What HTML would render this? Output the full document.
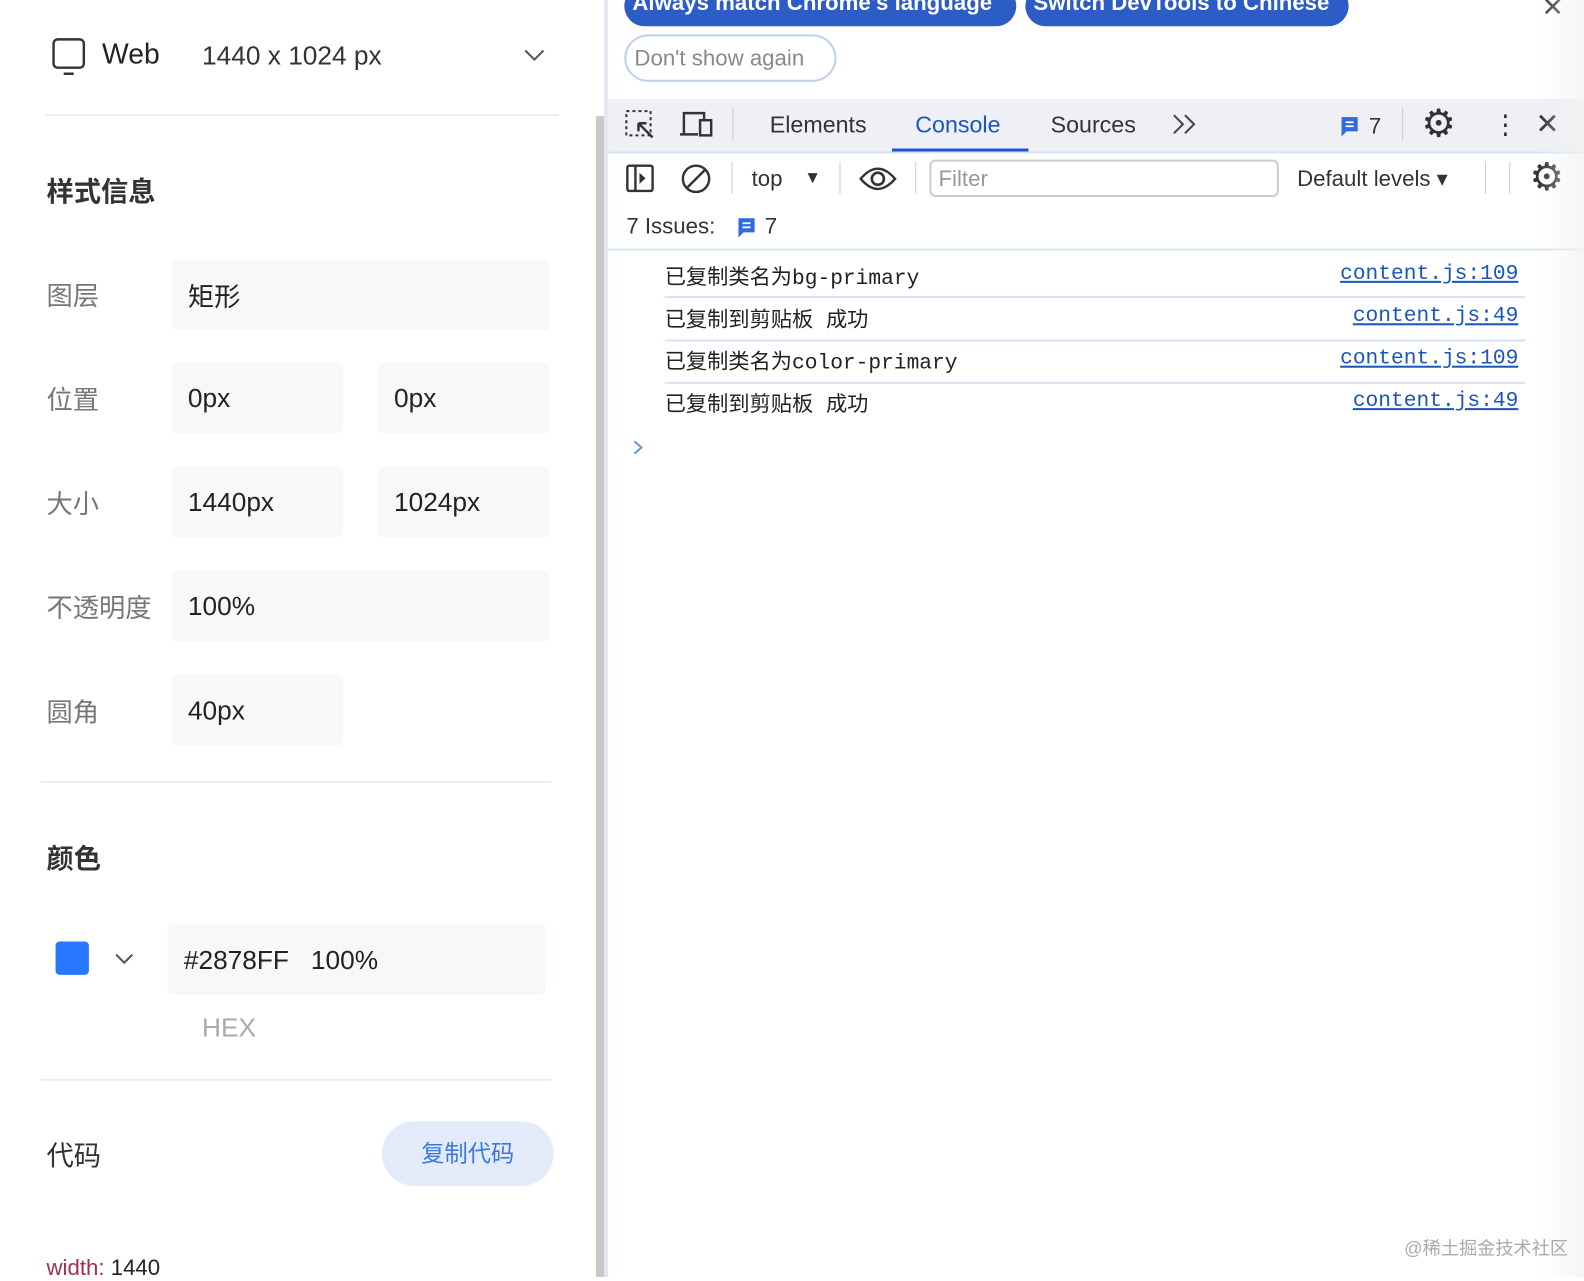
<!DOCTYPE html>
<html><head><meta charset="utf-8"><style>
*{margin:0;padding:0;box-sizing:border-box}
body{width:1584px;height:1264px;overflow:hidden;background:#fff;font-family:"Liberation Sans","Noto Sans CJK SC",sans-serif;position:relative;color:#222}
#w{position:absolute;left:0;top:0;width:1568px;height:1252px;transform:scale(1.0102);transform-origin:0 0}
.a{position:absolute;white-space:nowrap}
.lbl{font-size:26px;color:#777}
.box{position:absolute;background:#f7f8fa;border-radius:6px;font-size:26px;color:#222;padding-left:16px;display:flex;align-items:center;height:70px}
.hr{position:absolute;height:2px;background:#ececec}
.mono{font-family:"Liberation Mono","Noto Sans CJK SC",monospace}
.row{position:absolute;left:658px;font-size:21px;color:#222}
.lnk{position:absolute;right:65px;font-size:21px;color:#1a55b8;text-decoration:underline;font-family:"Liberation Mono",monospace}
.sep{position:absolute;left:658px;width:852px;height:2px;background:#d6e4f5}
</style></head><body><div id="w">
<svg class="a" style="left:51px;top:37px" width="38" height="38" viewBox="0 0 38 38"><rect x="2" y="2" width="30" height="28" rx="4" fill="none" stroke="#333" stroke-width="2.4"/><line x1="12" y1="36" x2="22" y2="36" stroke="#333" stroke-width="2.4"/></svg>
<div class="a" style="left:101px;top:38px;font-size:28px;color:#222">Web</div>
<div class="a" style="left:200px;top:40px;font-size:26px;color:#333">1440 x 1024 px</div>
<svg class="a" style="left:518px;top:48px" width="22" height="14"><polyline points="2,2 11,11 20,2" fill="none" stroke="#555" stroke-width="2"/></svg>
<div class="hr" style="left:45px;top:113px;width:508px"></div>
<div class="a" style="left:46px;top:168px;font-size:27px;font-weight:bold;color:#333">样式信息</div>
<div class="a lbl" style="left:46px;top:273px">图层</div>
<div class="box" style="left:170px;top:257px;width:374px">矩形</div>
<div class="a lbl" style="left:46px;top:376px">位置</div>
<div class="box" style="left:170px;top:359px;width:170px">0px</div>
<div class="box" style="left:374px;top:359px;width:170px">0px</div>
<div class="a lbl" style="left:46px;top:479px">大小</div>
<div class="box" style="left:170px;top:462px;width:170px">1440px</div>
<div class="box" style="left:374px;top:462px;width:170px">1024px</div>
<div class="a lbl" style="left:46px;top:582px">不透明度</div>
<div class="box" style="left:170px;top:565px;width:374px">100%</div>
<div class="a lbl" style="left:46px;top:685px">圆角</div>
<div class="box" style="left:170px;top:668px;width:170px">40px</div>
<div class="hr" style="left:40px;top:773px;width:506px"></div>
<div class="a" style="left:46px;top:828px;font-size:27px;font-weight:bold;color:#333">颜色</div>
<div class="a" style="left:55px;top:932px;width:33px;height:33px;background:#2878ff;border-radius:4px"></div>
<svg class="a" style="left:113px;top:943px" width="20" height="13"><polyline points="2,2 10,10 18,2" fill="none" stroke="#555" stroke-width="2"/></svg>
<div class="box" style="left:166px;top:915px;width:374px">#2878FF&nbsp;&nbsp;&nbsp;100%</div>
<div class="a" style="left:200px;top:1002px;font-size:26px;color:#aaa">HEX</div>
<div class="hr" style="left:40px;top:1068px;width:506px"></div>
<div class="a" style="left:46px;top:1122px;font-size:27px;color:#333">代码</div>
<div class="a" style="left:378px;top:1110px;width:170px;height:64px;border-radius:32px;background:#e3ebfb;color:#3a78e0;font-size:23px;text-align:center;line-height:64px">复制代码</div>
<div class="a" style="left:46px;top:1242px;font-size:22px;color:#a03050">width: <span style="color:#222">1440</span></div>
<div class="a" style="left:590px;top:115px;width:8px;height:1149px;background:#c8c8c8"></div>
<div class="a" style="left:598px;top:0;width:4px;height:1264px;background:#e2e8f2"></div>
<div class="a" style="left:618px;top:-14px;width:388px;height:40px;border-radius:20px;background:#2c5cc5;color:#fff;font-size:22px;font-weight:bold;padding-left:8px;line-height:34px">Always match Chrome's language</div>
<div class="a" style="left:1015px;top:-14px;width:320px;height:40px;border-radius:20px;background:#2c5cc5;color:#fff;font-size:22px;font-weight:bold;padding-left:8px;line-height:34px">Switch DevTools to Chinese</div>
<div class="a" style="left:1526px;top:-8px;font-size:26px;color:#333">✕</div>
<div class="a" style="left:618px;top:34px;width:210px;height:47px;border-radius:24px;border:2px solid #c0cff0;color:#888;font-size:22px;line-height:43px;padding-left:8px">Don't show again</div>
<div class="a" style="left:602px;top:98px;width:982px;height:52px;background:#eef0f5"></div>
<svg class="a" style="left:618px;top:108px" width="34" height="32"><rect x="2" y="2" width="24" height="24" fill="none" stroke="#333" stroke-width="2" stroke-dasharray="3 3"/><path d="M14 14 L28 28 M14 14 L14 22 M14 14 L22 14" stroke="#333" stroke-width="2.4" fill="none"/></svg>
<svg class="a" style="left:673px;top:108px" width="34" height="30"><path d="M4 24 V4 H24 V10" stroke="#333" stroke-width="2.4" fill="none"/><line x1="0" y1="25" x2="18" y2="25" stroke="#333" stroke-width="2.4"/><rect x="20" y="11" width="11" height="15" fill="none" stroke="#333" stroke-width="2.4"/></svg>
<div class="a" style="left:725px;top:106px;width:1px;height:34px;background:#ccc"></div>
<div class="a" style="left:762px;top:110px;font-size:23px;color:#333">Elements</div>
<div class="a" style="left:906px;top:110px;font-size:23px;color:#1a55c8">Console</div>
<div class="a" style="left:883px;top:147px;width:135px;height:3px;background:#1a55c8"></div>
<div class="a" style="left:1040px;top:110px;font-size:23px;color:#333">Sources</div>
<svg class="a" style="left:1160px;top:112px" width="26" height="22"><path d="M2 2 L11 11 L2 20 M13 2 L22 11 L13 20" fill="none" stroke="#444" stroke-width="2"/></svg>
<svg class="a" style="left:1326px;top:114px" width="20" height="22"><path d="M2 2 H18 V16 H7 L2 21 Z" fill="#2e6ae0"/><path d="M6 7 H14 M6 11 H14" stroke="#fff" stroke-width="1.8"/></svg>
<div class="a" style="left:1355px;top:112px;font-size:22px;color:#333">7</div>
<div class="a" style="left:1388px;top:106px;width:1px;height:34px;background:#ccc"></div>
<div class="a" style="left:1407px;top:100px;font-size:38px;color:#333">⚙</div>
<div class="a" style="left:1477px;top:108px;font-size:26px;color:#333;line-height:30px">⋮</div>
<div class="a" style="left:1520px;top:106px;font-size:28px;color:#333">✕</div>
<div class="a" style="left:602px;top:150px;width:982px;height:2px;background:#d6e4f5"></div>
<svg class="a" style="left:619px;top:162px" width="30" height="30"><rect x="2" y="2" width="25" height="25" rx="2" fill="none" stroke="#333" stroke-width="2.4"/><line x1="10" y1="2" x2="10" y2="27" stroke="#333" stroke-width="2.4"/><path d="M14 9 L20 14.5 L14 20Z" fill="#333"/></svg>
<svg class="a" style="left:673px;top:161px" width="32" height="32"><circle cx="16" cy="16" r="13" fill="none" stroke="#333" stroke-width="2.4"/><line x1="7" y1="25" x2="25" y2="7" stroke="#333" stroke-width="2.4"/></svg>
<div class="a" style="left:724px;top:160px;width:1px;height:32px;background:#ccc"></div>
<div class="a" style="left:744px;top:164px;font-size:22px;color:#333">top</div>
<div class="a" style="left:796px;top:166px;font-size:17px;color:#333">▼</div>
<div class="a" style="left:831px;top:160px;width:1px;height:32px;background:#ccc"></div>
<svg class="a" style="left:850px;top:163px" width="38" height="28"><path d="M2 14 Q19 -6 36 14 Q19 34 2 14Z" fill="none" stroke="#333" stroke-width="2.4"/><circle cx="19" cy="14" r="6" fill="none" stroke="#333" stroke-width="2.6"/></svg>
<div class="a" style="left:906px;top:160px;width:1px;height:32px;background:#ccc"></div>
<div class="a" style="left:920px;top:158px;width:346px;height:37px;border:2px solid #ccc;border-radius:6px;color:#999;font-size:22px;padding-left:7px;line-height:33px">Filter</div>
<div class="a" style="left:1284px;top:164px;font-size:22px;color:#333">Default levels ▾</div>
<div class="a" style="left:1470px;top:160px;width:1px;height:32px;background:#ccc"></div>
<div class="a" style="left:1494px;top:160px;width:1px;height:32px;background:#ccc"></div>
<div class="a" style="left:1514px;top:153px;font-size:38px;color:#333">⚙</div>
<div class="a" style="left:620px;top:211px;font-size:22px;color:#333">7 Issues:</div>
<svg class="a" style="left:729px;top:214px" width="20" height="22"><path d="M2 2 H18 V16 H7 L2 21 Z" fill="#2e6ae0"/><path d="M6 7 H14 M6 11 H14" stroke="#fff" stroke-width="1.8"/></svg>
<div class="a" style="left:757px;top:211px;font-size:22px;color:#333">7</div>
<div class="a" style="left:602px;top:246px;width:982px;height:2px;background:#d6e4f5"></div>
<div class="row mono" style="top:258px">已复制类名为bg-primary</div><div class="lnk" style="top:260px">content.js:109</div>
<div class="sep" style="top:293px"></div>
<div class="row mono" style="top:300px">已复制到剪贴板 成功</div><div class="lnk" style="top:302px">content.js:49</div>
<div class="sep" style="top:336px"></div>
<div class="row mono" style="top:342px">已复制类名为color-primary</div><div class="lnk" style="top:344px">content.js:109</div>
<div class="sep" style="top:378px"></div>
<div class="row mono" style="top:384px">已复制到剪贴板 成功</div><div class="lnk" style="top:386px">content.js:49</div>
<svg class="a" style="left:626px;top:435px" width="12" height="16"><polyline points="2,2 9,8 2,14" fill="none" stroke="#6a8fe0" stroke-width="2"/></svg>
<div class="a" style="left:1524px;top:0;width:60px;height:1264px;background:linear-gradient(to right,rgba(240,240,240,0),#f2f2f2)"></div>
<div class="a" style="left:1390px;top:1222px;font-size:18px;color:#aaa">@稀土掘金技术社区</div>
</div></body></html>
